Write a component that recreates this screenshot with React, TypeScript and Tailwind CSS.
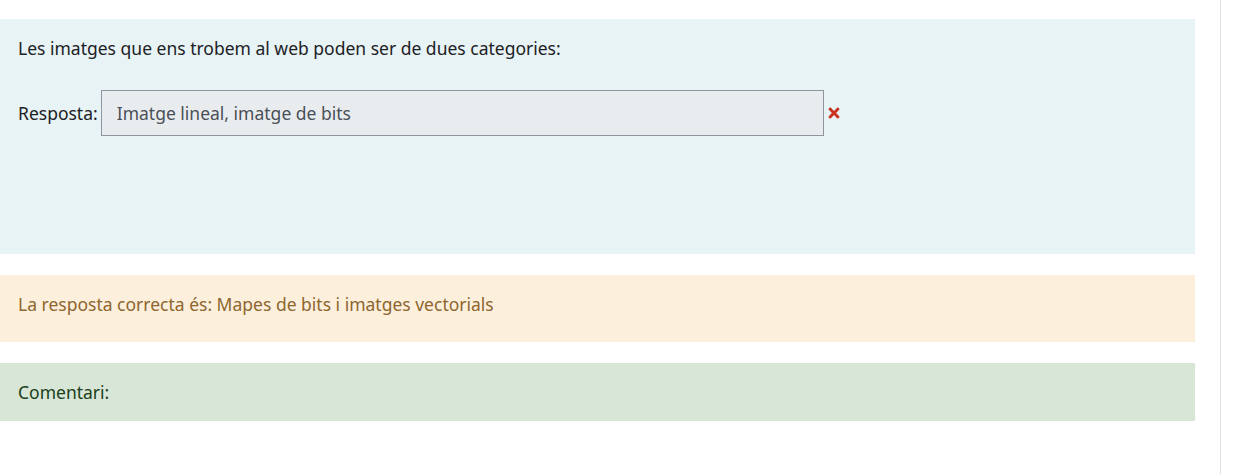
import { FaTimes } from "react-icons/fa";

export default function App() {
  return (
    <div
      className="flex h-[474px] w-[1239px] bg-white text-[17.5px] leading-[24px] text-[#1d2125]"
      style={{ fontFamily: '"Noto Sans", "Open Sans", sans-serif' }}
    >
      <div className="flex w-[1195px] flex-col gap-[21px] pt-[19px]">
        <div className="h-[235px] bg-[#e7f3f5] px-[18px] pt-[17px]">
          <p>Les imatges que ens trobem al web poden ser de dues categories:</p>
          <div className="mt-[30px] flex items-center">
            <span className="mr-[3px]">Resposta:</span>
            <div className="flex h-[46px] w-[723px] items-center border border-[#8f959e] bg-[#e9ecef] px-[15px] text-[#495057]">
              Imatge lineal, imatge de bits
            </div>
            <FaTimes className="ml-[3px] h-[16px] w-[14px] text-[#ca3120]" />
          </div>
        </div>
        <div className="h-[67px] bg-[#fcefdc] px-[18px] pt-[17px] text-[#8e662e]">
          La resposta correcta és: Mapes de bits i imatges vectorials
        </div>
        <div className="flex h-[58px] items-center bg-[#d7e6d7] px-[18px] text-[#1c3f1a]">
          Comentari:
        </div>
      </div>
      <div className="ml-[25px] h-full w-px bg-[#dee2e6]" />
    </div>
  );
}
